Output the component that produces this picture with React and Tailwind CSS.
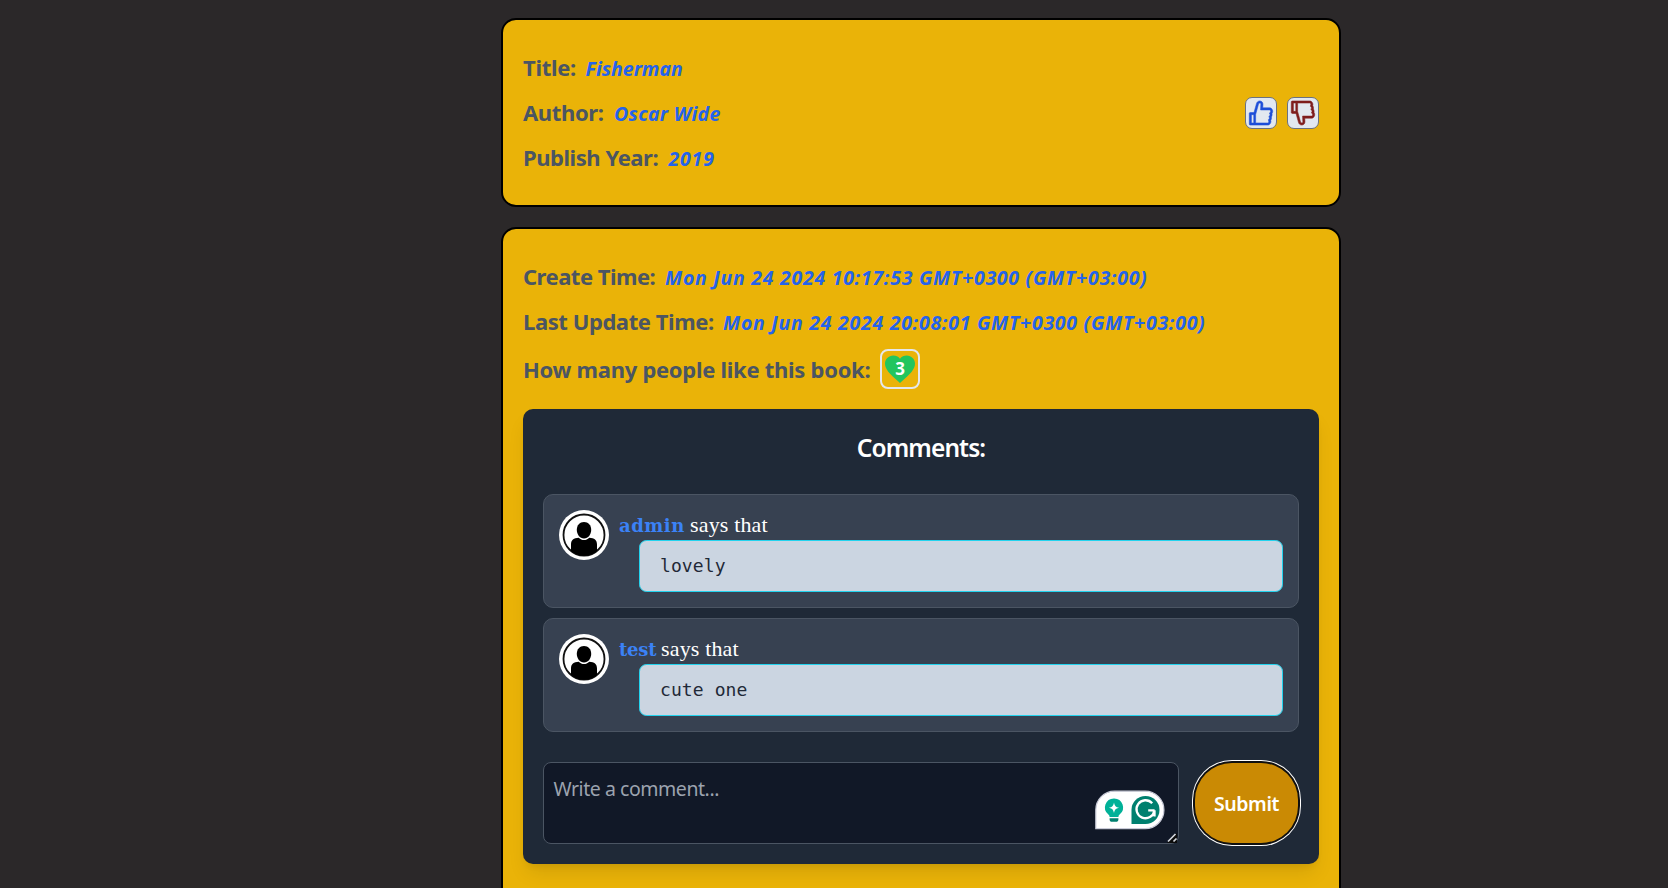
import { AiOutlineLike, AiOutlineDislike } from 'react-icons/ai';
import { MdFavorite } from 'react-icons/md';

const cardClass =
  'w-[840px] rounded-[15px] border-2 border-black bg-[#eab308] px-5 py-[30px]';

function Field({ label, value, labelClass, valueClass }) {
  return (
    <div className="flex h-[35px] items-baseline whitespace-nowrap leading-[34px]">
      <span className={`text-[22px] font-bold text-[#4b5563] ${labelClass}`}>{label}</span>
      <span className={`text-[19.5px] font-bold italic text-[#2563eb] ${valueClass}`}>{value}</span>
    </div>
  );
}

function Avatar() {
  return (
    <svg viewBox="0 0 50 50" className="size-[50px] shrink-0">
      <circle cx="25" cy="25" r="25" fill="#fff" />
      <circle cx="25" cy="25" r="20.5" fill="#fff" stroke="#111" strokeWidth="1.8" />
      <path
        d="M25 12c4.300 0 7.200 3.200 7.200 7.800 0 4.600-3 8.800-7.200 8.800s-7.200-4.200-7.200-8.800C17.800 15.200 20.700 12 25 12Z"
        fill="#000"
      />
      <path
        d="M12 41v-6.500c0-4.300 2.600-6.500 7.800-6.700 1.500 1.500 3.300 2.300 5.200 2.300s3.700-.8 5.200-2.300c5.200.2 7.800 2.400 7.800 6.700V41c-3.500 3.200-8 4.800-13 4.800S15.500 44.200 12 41Z"
        fill="#000"
      />
    </svg>
  );
}

function Comment({ name, nameClass, text }) {
  return (
    <div className="flex h-[114px] gap-[10px] rounded-[10px] border border-[#4b5563] bg-[#374151] p-[15px]">
      <Avatar />
      <div className="flex-1">
        <p className="flex h-[30px] items-baseline whitespace-pre leading-[29px]">
          <span
            className={`font-['DejaVu_Serif',serif] text-[18px] font-bold text-[#3b82f6] ${nameClass}`}
          >
            {name}
          </span>
          <span className="font-['Liberation_Serif',serif] text-[22px] tracking-[0.15px] text-white">
            says that
          </span>
        </p>
        <div className="ml-5 flex h-[52px] items-center rounded-[7.5px] border border-[#22d3ee] bg-[#cbd5e1] px-5 pb-[2px] font-['DejaVu_Sans_Mono',monospace] text-[18px] tracking-[0.1px] text-[#1f2937]">
          {text}
        </div>
      </div>
    </div>
  );
}

function WritingBadge() {
  return (
    <svg viewBox="0 0 70 40" className="absolute top-[28px] left-[551.5px] h-[40px] w-[70px]">
      <path
        d="M.8 38.700V20C.8 9.500 9 1.200 19.500 1.200h30.700a18.750 18.750 0 0 1 0 37.500Z"
        fill="#fff"
        stroke="#c9cbd8"
        strokeWidth="1.200"
      />
      <path
        d="M19 8.500a9 9 0 0 1 5.600 16.100c-.8.700-1.200 1.400-1.200 2.400h-8.800c0-1-.4-1.700-1.200-2.400A9 9 0 0 1 19 8.500Z"
        fill="#00b198"
      />
      <path d="M14.600 28.300h8.800v1.200c0 1.400-1 2.300-2.300 2.300h-4.200c-1.300 0-2.300-.9-2.300-2.300Z" fill="#00806f" />
      <path
        d="M19 12.500c.8 3.600 1.700 4.500 5.200 5.300-3.500.8-4.400 1.700-5.200 5.300-.8-3.600-1.700-4.500-5.200-5.300 3.500-.8 4.400-1.700 5.200-5.300Z"
        fill="#fff"
      />
      <path d="M36.500 34V20A14 14 0 1 1 50.500 34Z" fill="#00806f" />
      <path
        d="M57.200 13.200A9 9 0 1 0 59.400 20.700M53.200 20.300h6.400M59.500 20.300v6.200"
        fill="none"
        stroke="#fff"
        strokeWidth="2.300"
      />
    </svg>
  );
}

export default function App() {
  return (
    <div className="flex h-[888px] flex-col items-center overflow-hidden bg-[#2b2829] pt-[18px] pr-0 pl-[174px] font-['Noto_Sans',sans-serif]">
      <section className={`${cardClass} flex h-[189px] shrink-0 items-center justify-between`}>
        <div className="flex flex-col gap-[10px]">
          <Field label="Title:" value="Fisherman" labelClass="w-[62.5px] tracking-[-0.3px]" valueClass="tracking-[0px]" />
          <Field label="Author:" value="Oscar Wide" labelClass="w-[91px] tracking-[-0.35px]" valueClass="tracking-[0.32px]" />
          <Field label="Publish Year:" value="2019" labelClass="w-[145.5px] tracking-[-0.45px]" valueClass="tracking-[0.8px]" />
        </div>
        <div className="flex gap-[10px]">
          <button className="flex size-8 items-center justify-center rounded-[7px] border border-[#6b7280] bg-[#e2e8f0] text-[#1d4ed8]">
            <AiOutlineLike size={30} strokeWidth={18} />
          </button>
          <button className="flex size-8 items-center justify-center rounded-[7px] border border-[#6b7280] bg-[#e2e8f0] text-[#7f1d1d]">
            <AiOutlineDislike size={30} strokeWidth={18} />
          </button>
        </div>
      </section>

      <section className={`${cardClass} mt-5 h-[720px] shrink-0`}>
        <div className="flex flex-col gap-[10px]">
          <Field
            label="Create Time:"
            value="Mon Jun 24 2024 10:17:53 GMT+0300 (GMT+03:00)"
            labelClass="w-[142px] tracking-[-0.5px]"
            valueClass="tracking-[0.72px]"
          />
          <Field
            label="Last Update Time:"
            value="Mon Jun 24 2024 20:08:01 GMT+0300 (GMT+03:00)"
            labelClass="w-[200px] tracking-[-0.42px]"
            valueClass="tracking-[0.72px]"
          />
          <div className="flex h-10 items-center">
            <span className="w-[357px] whitespace-nowrap text-[22px] font-bold tracking-[-0.28px] text-[#4b5563]">
              How many people like this book:
            </span>
            <div className="relative flex size-10 items-center justify-center rounded-[8px] border-2 border-[#e5e7eb] text-[#22c55e]">
              <MdFavorite size={36} className="shrink-0" />
              <span className="absolute inset-0 flex items-center justify-center text-[17px] font-bold text-white">
                3
              </span>
            </div>
          </div>
        </div>

        <div className="mt-5 h-[455px] rounded-[10px] bg-[#1f2937] p-5 shadow-[0_12px_19px_-4px_rgba(0,0,0,0.1),0_5px_8px_-5px_rgba(0,0,0,0.1)]">
          <h2 className="mb-[28px] h-[37px] text-center text-[24.5px] leading-[37px] font-semibold tracking-[-0.9px] text-white">
            Comments:
          </h2>
          <div className="flex flex-col gap-[10px]">
            <Comment name="admin" nameClass="w-[71px] tracking-[0.5px]" text="lovely" />
            <Comment name="test" nameClass="w-[42px] tracking-[-0.2px]" text="cute one" />
          </div>
          <div className="mt-[30px] flex items-center gap-4">
            <div className="relative h-[82px] w-[636px]">
              <textarea
                placeholder="Write a comment..."
                className="block h-[82px] w-full resize-none rounded-[8px] border border-[#4b5563] bg-[#111827] px-[9.500px] pt-[11px] text-[19.5px] leading-[30px] tracking-[-0.45px] text-white placeholder:text-[#9ca3af]"
              />
              <WritingBadge />
              <svg viewBox="0 0 12 12" className="absolute right-[1px] bottom-[1px] size-3">
                <path d="M1 12 11 2v10Z" fill="#0b0b0b" />
                <path d="M2 10.500 9.500 3M7.500 10.500 10.500 7.500" stroke="#d1d5db" strokeWidth="1.700" />
              </svg>
            </div>
            <button className="h-[80px] w-[103px] shrink-0 rounded-[37px] bg-[#ca8a04] pt-[2px] text-[19.5px] font-semibold tracking-[-0.4px] text-white shadow-[0_0_0_2px_#101010,0_0_0_3px_#fff]">
              Submit
            </button>
          </div>
        </div>
      </section>
    </div>
  );
}
